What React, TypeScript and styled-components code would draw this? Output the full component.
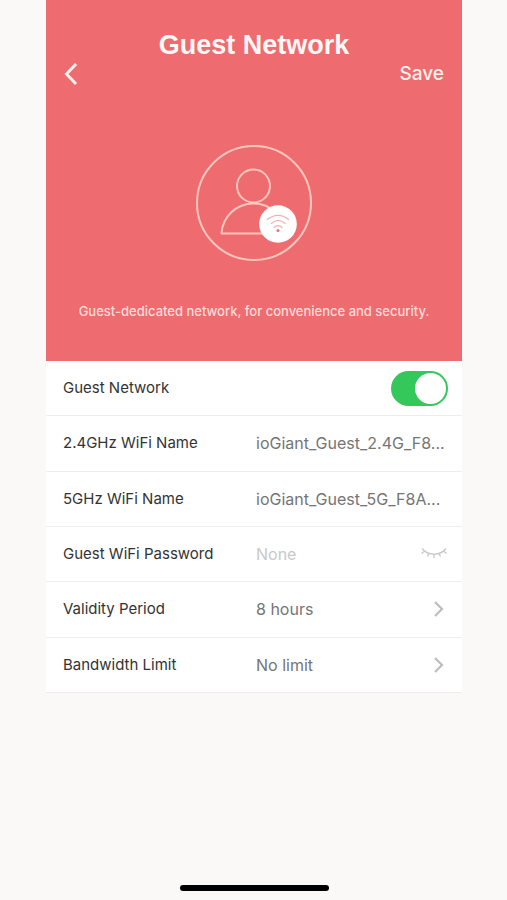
import React, { useState } from "react";
import styled, { createGlobalStyle } from "styled-components";

const GlobalStyle = createGlobalStyle`
  *, *::before, *::after { box-sizing: border-box; }
  body {
    margin: 0;
    background: #fbf9f7;
    color: #333333;
    font-family: Inter, "Liberation Sans", sans-serif;
  }
  button, input { font: inherit; color: inherit; }
`;

const Page = styled.main`
  display: flex;
  flex-direction: column;
  min-height: 100vh;
  padding: 0 45px 0 46px;
`;

const Hero = styled.header`
  display: flex;
  flex-direction: column;
  align-items: center;
  padding: 28px 16px 40px;
  background: #ee6c70;
  color: #fff8f6;
`;

const Title = styled.h1`
  margin: 0;
  font: bold 27px/34px "Liberation Sans", Arial, sans-serif;
`;

const NavBar = styled.nav`
  display: flex;
  align-items: center;
  justify-content: space-between;
  align-self: stretch;
  height: 24px;
`;

const NavButton = styled.button`
  display: flex;
  align-items: center;
  padding: 0 2px;
  border: 0;
  background: none;
  color: #fff0ec;
  font-size: 19px;
  line-height: 24px;
  font-weight: 500;
  cursor: pointer;
`;

const Emblem = styled.svg`
  width: 118px;
  height: 118px;
  margin-top: 58px;
`;

const Tagline = styled.p`
  margin: 39px 0 0;
  color: #ffdcd8;
  font-size: 13px;
  line-height: 20px;
  font-weight: 500;
  text-align: center;
`;

const Settings = styled.form`
  display: grid;
  grid-auto-rows: 1fr;
  min-height: 332px;
  background: #ffffff;
`;

const Row = styled.div`
  display: grid;
  grid-template-columns: 193px minmax(0, 1fr) auto;
  align-items: center;
  padding: 0 14px 0 17px;
  border-bottom: 1px solid #efeeee;
`;

const Label = styled.label`
  font-size: 15px;
  line-height: 24px;
`;

const ValueInput = styled.input`
  width: 100%;
  padding: 0;
  border: 0;
  outline: 0;
  background: none;
  color: #757575;
  font-size: 16px;
  line-height: 24px;
  text-overflow: ellipsis;

  &::placeholder { color: #c9c9c9; opacity: 1; }
`;

const ChoiceButton = styled.button`
  display: flex;
  grid-column: 2 / -1;
  align-items: center;
  justify-content: space-between;
  padding: 0 4px 0 0;
  border: 0;
  background: none;
  color: #757575;
  font-size: 16px;
  line-height: 24px;
  cursor: pointer;
`;

const IconButton = styled.button`
  display: flex;
  padding: 0;
  border: 0;
  background: none;
  color: #cacaca;
  cursor: pointer;
`;

const Switch = styled.input`
  grid-column: 3;
  display: flex;
  justify-content: flex-start;
  width: 57px;
  height: 35px;
  margin: 0;
  padding: 2px;
  border-radius: 18px;
  background: #dddddd;
  appearance: none;
  cursor: pointer;

  &::before {
    content: "";
    width: 31px;
    height: 31px;
    border-radius: 50%;
    background: #ffffff;
  }

  &:checked {
    justify-content: flex-end;
    background: #34c759;
  }
`;

const HomeIndicator = styled.div`
  align-self: center;
  width: 149px;
  height: 6px;
  margin: auto 0 9px;
  border-radius: 3px;
  background: #000000;
`;

function BackIcon() {
  return (
    <svg width="14" height="24" viewBox="0 0 14 24" fill="none" stroke="currentColor" strokeWidth="3" aria-hidden="true">
      <path d="M12 2 2.500 12 12 22" />
    </svg>
  );
}

function GuestEmblem() {
  return (
    <Emblem viewBox="0 0 118 118" fill="none" stroke="#ffc6bd" strokeWidth="2" aria-hidden="true">
      <circle cx="59" cy="59" r="57" />
      <circle cx="58.500" cy="42" r="16.500" />
      <path d="M26.500 89.500C27.500 73 41 59.500 58.500 59.500S89 73 90.500 89.500Z" strokeLinejoin="round" />
      <circle cx="83" cy="80" r="18.800" fill="#ffffff" stroke="none" />
      <g stroke="#eeb4b2" strokeWidth="1.300">
        <path d="M72 75.800Q83 67 94 75.800" />
        <path d="M76 79.700Q83 73 90.500 79.700" />
        <path d="M78.700 83.700Q83 79.500 87.300 83.700" />
      </g>
      <circle cx="83" cy="86.500" r="1.500" fill="#e5777b" stroke="none" />
    </Emblem>
  );
}

function ClosedEyeIcon() {
  return (
    <svg width="27" height="14" viewBox="0 0 27 14" fill="none" stroke="currentColor" strokeWidth="1.400" aria-hidden="true">
      <path d="M1 1.500C7 9 19 9 25 1.500M3.500 4 .5 6.500M8 6.500 6.500 9.500M13 7V11M18 6.500 19.500 9.500M22.500 4 25.500 6.500" />
    </svg>
  );
}

function ChevronIcon() {
  return (
    <svg width="11" height="18" viewBox="0 0 11 18" fill="none" stroke="#bdbdbd" strokeWidth="2.200" aria-hidden="true">
      <path d="M2 2 9 9 2 16" />
    </svg>
  );
}

function ChoiceRow({ id, label, value }: { id: string; label: string; value: string }) {
  return (
    <Row>
      <Label htmlFor={id} id={`${id}-label`}>{label}</Label>
      <ChoiceButton id={id} type="button" aria-labelledby={`${id}-label ${id}-value`}>
        <span id={`${id}-value`}>{value}</span>
        <ChevronIcon />
      </ChoiceButton>
    </Row>
  );
}

export default function App() {
  const [enabled, setEnabled] = useState(true);
  const [showPassword, setShowPassword] = useState(false);

  return (
    <>
      <GlobalStyle />
      <Page>
        <Hero>
          <Title>Guest Network</Title>
          <NavBar>
            <NavButton type="button" aria-label="Back"><BackIcon /></NavButton>
            <NavButton type="submit" form="guest-settings">Save</NavButton>
          </NavBar>
          <GuestEmblem />
          <Tagline>Guest-dedicated network, for convenience and security.</Tagline>
        </Hero>
        <Settings id="guest-settings" onSubmit={(event) => event.preventDefault()}>
          <Row>
            <Label htmlFor="enabled">Guest Network</Label>
            <Switch
              id="enabled"
              type="checkbox"
              role="switch"
              checked={enabled}
              onChange={(event) => setEnabled(event.target.checked)}
            />
          </Row>
          <Row>
            <Label htmlFor="name-24">2.4GHz WiFi Name</Label>
            <ValueInput id="name-24" defaultValue="ioGiant_Guest_2.4G_F8..." />
          </Row>
          <Row>
            <Label htmlFor="name-5">5GHz WiFi Name</Label>
            <ValueInput id="name-5" defaultValue="ioGiant_Guest_5G_F8A..." />
          </Row>
          <Row>
            <Label htmlFor="password">Guest WiFi Password</Label>
            <ValueInput id="password" type={showPassword ? "text" : "password"} placeholder="None" />
            <IconButton
              type="button"
              aria-label="Show password"
              aria-pressed={showPassword}
              onClick={() => setShowPassword(!showPassword)}
            >
              <ClosedEyeIcon />
            </IconButton>
          </Row>
          <ChoiceRow id="validity" label="Validity Period" value="8 hours" />
          <ChoiceRow id="bandwidth" label="Bandwidth Limit" value="No limit" />
        </Settings>
        <HomeIndicator />
      </Page>
    </>
  );
}
